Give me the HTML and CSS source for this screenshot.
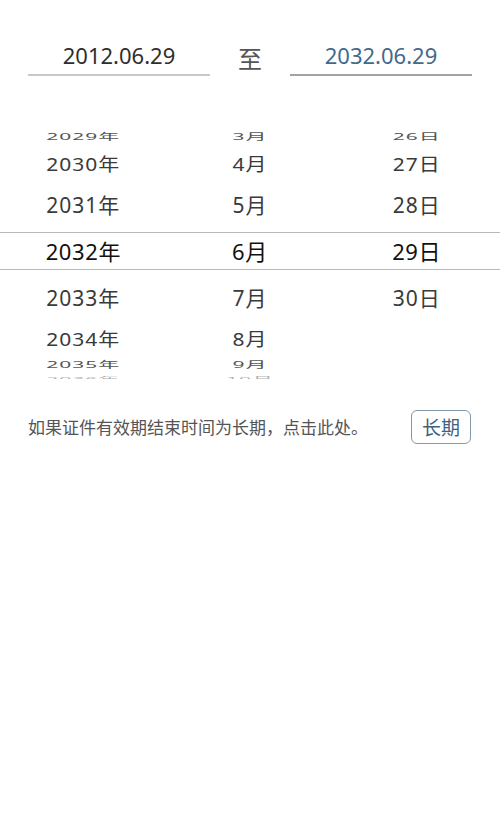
FILE: index.html
```html
<!DOCTYPE html>
<html lang="zh-CN">
<head>
<meta charset="utf-8">
<title>有效期</title>
<link rel="stylesheet" href="styles.css">
</head>
<body>
<div class="dates">
  <div class="date-field">2012.06.29</div>
  <div class="to">至</div>
  <div class="date-field active">2032.06.29</div>
</div>

<div class="wheel">
  <div class="row r1"><span>2029年</span><span>3月</span><span>26日</span></div>
  <div class="row r2"><span>2030年</span><span>4月</span><span>27日</span></div>
  <div class="row r3"><span>2031年</span><span>5月</span><span>28日</span></div>
  <div class="row sel"><span>2032年</span><span>6月</span><span>29日</span></div>
  <div class="row r5"><span>2033年</span><span>7月</span><span>30日</span></div>
  <div class="row r6"><span>2034年</span><span>8月</span><span></span></div>
  <div class="row r7"><span>2035年</span><span>9月</span><span></span></div>
  <div class="row r8"><span>2036年</span><span>10月</span><span></span></div>
</div>

<div class="hint">
  <p class="hint-text">如果证件有效期结束时间为长期，点击此处。</p>
  <button class="long-btn" type="button">长期</button>
</div>
</body>
</html>
```

FILE: styles.css
```css
html, body {
  margin: 0;
  padding: 0;
  background: #ffffff;
}

body {
  width: 500px;
  height: 830px;
  font-family: "Noto Sans", "Noto Sans CJK SC", sans-serif;
  color: #3a3a3a;
}

.dates {
  display: flex;
  align-items: flex-start;
  padding: 40px 28px 0 28px;
}

.date-field {
  width: 182px;
  font-size: 22px;
  line-height: 30px;
  padding-bottom: 4px;
  text-align: center;
  color: #2e2e2e;
  border-bottom: 2px solid #c9c9c9;
}

.date-field.active {
  color: #3f6a8d;
  border-bottom-color: #9fa3a6;
}

.to {
  flex: 1;
  text-align: center;
  font-family: "Noto Sans CJK SC", sans-serif;
  font-size: 24px;
  line-height: 30px;
  margin-top: 3px;
  color: #555555;
}

.wheel {
  margin-top: 46px;
}

.row {
  display: grid;
  grid-template-columns: 1fr 1fr 1fr;
  align-items: center;
  overflow: hidden;
}

.row span {
  text-align: center;
  font-size: 21px;
  line-height: 21px;
  letter-spacing: 1px;
  color: #3a3a3a;
}

.r1 { height: 28px; }
.r2 { height: 28px; }
.r3 { height: 54px; }
.sel {
  height: 36px;
  border-top: 1px solid #b9b9b9;
  border-bottom: 1px solid #b9b9b9;
}
.r5 { height: 56px; }
.r6 { height: 26px; }
.r7 { height: 24px; }
.r8 { height: 3px; align-items: start; }

.r1 span { transform: scaleY(0.42); color: #555555; }
.r2 span { transform: scaleY(0.88); }
.r6 span { transform: scaleY(0.88); }
.r7 span { transform: scaleY(0.42); color: #555555; }
.r8 span { transform: scaleY(0.25); transform-origin: top; color: #b0b0b0; }

.sel span {
  font-size: 22px;
  color: #111111;
  letter-spacing: 0.6px;
}

.hint {
  display: flex;
  justify-content: space-between;
  align-items: center;
  padding: 0 29px 0 28px;
  margin-top: 31px;
}

.hint-text {
  margin: 0;
  font-family: "Noto Sans CJK SC", sans-serif;
  font-size: 17px;
  line-height: 24px;
  color: #555555;
}

.long-btn {
  width: 60px;
  height: 34px;
  padding: 0;
  background: #ffffff;
  border: 1.5px solid #8399aa;
  border-radius: 6px;
  font-family: "Noto Sans CJK SC", sans-serif;
  font-size: 19px;
  line-height: 30px;
  color: #3f6280;
}
```
